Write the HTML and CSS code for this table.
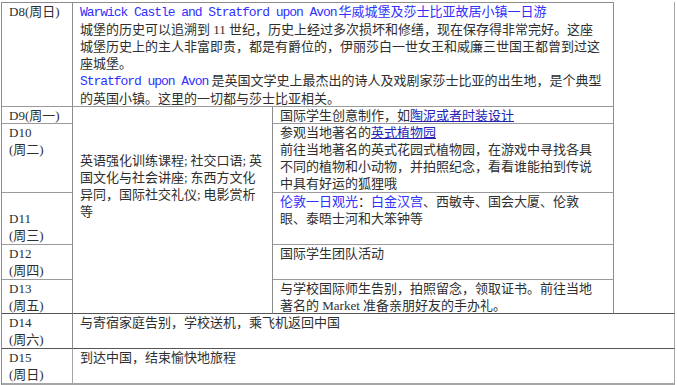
FILE: index.html
```html
<!DOCTYPE html>
<html lang="zh-CN">
<head>
<meta charset="utf-8">
<title>行程安排</title>
<link rel="stylesheet" href="styles.css">
</head>
<body>
<div class="sched">
  <div class="cell lab top-line r1">D8(周日)</div>
  <div class="cell txt top-line r1 span23">
    <div class="blue"><span class="mono">Warwick Castle and Stratford upon Avon</span><span class="gap">华威城堡及莎士比亚故居小镇一日游</span></div>
    <div>城堡的历史可以追溯到 11 世纪，历史上经过多次损坏和修缮，现在保存得非常完好。这座<br>城堡历史上的主人非富即贵，都是有爵位的，伊丽莎白一世女王和威廉三世国王都曾到过这<br>座城堡。</div>
    <div><span class="mono blue">Stratford upon Avon</span> 是英国文学史上最杰出的诗人及戏剧家莎士比亚的出生地，是个典型<br>的英国小镇。这里的一切都与莎士比亚相关。</div>
  </div>
  <div class="cell extra"></div>

  <div class="cell lab r2">D9(周一)</div>
  <div class="cell txt middle">英语强化训练课程<span class="semi">;</span>社交口语<span class="semi">;</span>英<br>国文化与社会讲座<span class="semi">;</span>东西方文化<br>异同，国际社交礼仪<span class="semi">;</span>电影赏析<br>等</div>
  <div class="cell txt r2 c3">国际学生创意制作，如<a class="link" href="#">陶泥或者时装设计</a></div>

  <div class="cell lab r3">D10<br>(周二)</div>
  <div class="cell txt r3 c3">参观当地著名的<a class="link" href="#">英式植物园</a><br>前往当地著名的英式花园式植物园，在游戏中寻找各具<br>不同的植物和小动物，并拍照纪念，看看谁能拍到传说<br>中具有好运的狐狸哦</div>

  <div class="cell lab r4 low">D11<br>(周三)</div>
  <div class="cell txt r4 c3"><span class="blue">伦敦一日观光</span>：<span class="blue">白金汉宫</span>、西敏寺、国会大厦、伦敦<br>眼、泰晤士河和大笨钟等</div>

  <div class="cell lab r5">D12<br>(周四)</div>
  <div class="cell txt r5 c3">国际学生团队活动</div>

  <div class="cell lab r6">D13<br>(周五)</div>
  <div class="cell txt r6 c3 dark-bottom">与学校国际师生告别，拍照留念，领取证书。前往当地<br>著名的 Market 准备亲朋好友的手办礼。</div>

  <div class="cell lab r7 dark-bottom">D14<br>(周六)</div>
  <div class="cell txt r7 span234 dark-bottom">与寄宿家庭告别，学校送机，乘飞机返回中国</div>

  <div class="cell lab r8 last">D15<br>(周日)</div>
  <div class="cell txt r8 span234 last">到达中国，结束愉快地旅程</div>
</div>
</body>
</html>
```

FILE: styles.css
```css
html, body {
  margin: 0;
  padding: 0;
  background: #ffffff;
}

body {
  font-family: "Liberation Serif", "Noto Sans CJK SC", serif;
  font-size: 13px;
  line-height: 17px;
  color: #2e2e2e;
}

.sched {
  display: grid;
  grid-template-columns: 71px 200px 341px 61px;
  grid-template-rows: 105px 17px 69px 52px 35px 34px 35px 36px;
  margin: 2px 0 0 1px;
  width: 674px;
  box-sizing: border-box;
  border-left: 1px solid #8c8c8c;
}

.cell {
  box-sizing: border-box;
  border-right: 1px solid #8c8c8c;
  border-bottom: 1px solid #9a9a9a;
  padding: 0 7px;
  white-space: nowrap;
  overflow: hidden;
}

.top-line { border-top: 1px solid #8c8c8c; }

.lab { grid-column: 1; }

.r1 { grid-row: 1; }
.r2 { grid-row: 2; }
.r3 { grid-row: 3; }
.r4 { grid-row: 4; }
.r5 { grid-row: 5; }
.r6 { grid-row: 6; }
.r7 { grid-row: 7; }
.r8 { grid-row: 8; }

.c3 { grid-column: 3; }
.span23 { grid-column: 2 / 4; }
.span234 { grid-column: 2 / 5; }

.extra {
  grid-column: 4;
  grid-row: 1 / 7;
  border-bottom-color: #555555;
  border-right-color: #a5a5a5;
}

.middle {
  grid-column: 2;
  grid-row: 2 / 7;
  padding-top: 45px;
  border-bottom-color: #555555;
}

.semi {
  display: inline-block;
  width: 6.5px;
}

.low { padding-top: 17px; }

.dark-bottom { border-bottom-color: #555555; }

.r6.lab { border-bottom-color: #555555; }

.last {
  border-bottom: 2px solid #a5a5a5;
  border-right-color: #a5a5a5;
}

.r7.span234 { border-right-color: #a5a5a5; }

.blue { color: #3030ff; }

.gap { margin-left: 2px; }

.mono {
  font-family: "Liberation Mono", "Noto Sans CJK SC", monospace;
  letter-spacing: -1.05px;
}

.link {
  color: #2222b4;
  text-decoration: underline;
}
```
